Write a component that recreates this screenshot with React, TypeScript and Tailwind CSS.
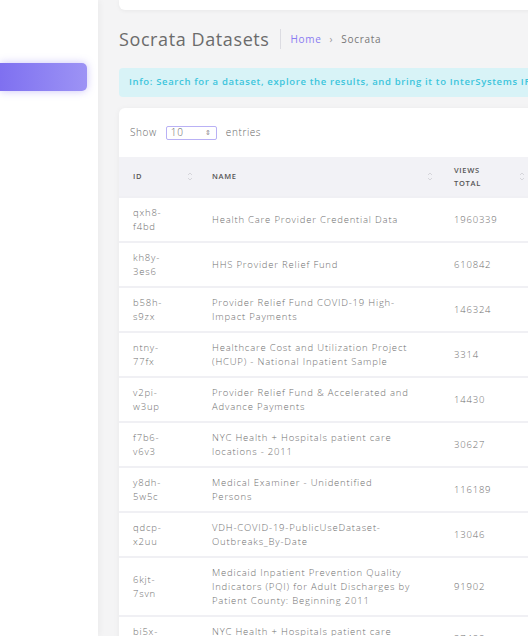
const ROWS = [
  { id: 'qxh8-f4bd', name: 'Health Care Provider Credential Data', views: '1960339' },
  { id: 'kh8y-3es6', name: 'HHS Provider Relief Fund', views: '610842' },
  { id: 'b58h-s9zx', name: 'Provider Relief Fund COVID-19 High-Impact Payments', views: '146324' },
  { id: 'ntny-77fx', name: 'Healthcare Cost and Utilization Project (HCUP) - National Inpatient Sample', views: '3314' },
  { id: 'v2pi-w3up', name: 'Provider Relief Fund & Accelerated and Advance Payments', views: '14430' },
  { id: 'f7b6-v6v3', name: 'NYC Health + Hospitals patient care locations - 2011', views: '30627' },
  { id: 'y8dh-5w5c', name: 'Medical Examiner - Unidentified Persons', views: '116189' },
  { id: 'qdcp-x2uu', name: 'VDH-COVID-19-PublicUseDataset-Outbreaks_By-Date', views: '13046' },
  { id: '6kjt-7svn', name: 'Medicaid Inpatient Prevention Quality Indicators (PQI) for Adult Discharges by Patient County: Beginning 2011', views: '91902' },
  { id: 'bi5x-ndcu', name: 'NYC Health + Hospitals patient care locations - 2012', views: '27488' },
];

function SortIcon() {
  return (
    <svg width="6" height="11" viewBox="0 0 6 11" className="shrink-0">
      <path d="M1 4 L3 2 L5 4" fill="none" stroke="#d2d2d8" strokeWidth="0.9" />
      <path d="M1 7 L3 9 L5 7" fill="none" stroke="#d2d2d8" strokeWidth="0.9" />
    </svg>
  );
}

export default function App() {
  return (
    <div
      className="flex h-[636px] w-[528px] overflow-hidden bg-[#f4f4f5]"
      style={{ fontFamily: '"Open Sans", "Liberation Sans", sans-serif' }}
    >
      {/* sidebar */}
      <aside className="relative z-10 w-[98px] shrink-0 bg-white pt-[63px] shadow-[2px_0_6px_rgba(0,0,0,0.04)]">
        <div className="h-[28px] w-[87px] rounded-r-[5px] bg-gradient-to-r from-[#7f70f0] to-[#9d93f5] shadow-[0_0_8px_rgba(124,108,240,0.4)]" />
      </aside>

      {/* main */}
      <main className="min-w-0 flex-1 pl-[21px]">
        <div className="w-[600px]">
          <div className="h-[10px] rounded-b-[6px] bg-white shadow-[0_1px_4px_rgba(0,0,0,0.05)]" />

          <div className="flex h-[58px] items-center">
            <h1 className="text-[18px] font-medium tracking-[0.6px] text-[#6b6b6b]">Socrata Datasets</h1>
            <div className="mx-[10px] h-[20px] w-px bg-[#dcdce2]" />
            <nav className="flex items-center gap-[8px] text-[10px] tracking-[0.7px] text-[#777]">
              <span className="text-[#8a7cf2]">Home</span>
              <span className="text-[#999]">›</span>
              <span>Socrata</span>
            </nav>
          </div>

          <div className="flex h-[29px] items-center rounded-l-[4px] bg-[#d8f3f7] pl-[10px] text-[9.5px] font-semibold tracking-[0.65px] text-[#3cc5dc]">
            Info: Search for a dataset, explore the results, and bring it to InterSystems IRIS.
          </div>

          <div className="mt-[11px] rounded-tl-[6px] bg-white shadow-[0_1px_6px_rgba(0,0,0,0.05)]">
            <div className="flex h-[49px] items-center pl-[11px] text-[10px] font-light tracking-[0.6px] text-[#666]">
              <span>Show</span>
              <div className="ml-[9px] flex h-[14px] w-[51px] items-center justify-between rounded-[2px] border border-[#b9b1f5] px-[4px] text-[#666]">
                <span>10</span>
                <span className="text-[7px] leading-none text-[#888]">⇕</span>
              </div>
              <span className="ml-[9px]">entries</span>
            </div>

            <table className="w-full border-collapse text-left">
              <colgroup>
                <col className="w-[80px]" />
                <col className="w-[242px]" />
                <col />
              </colgroup>
              <thead>
                <tr className="h-[40px] bg-[#f2f2f6] text-[7.5px] font-semibold uppercase tracking-[0.7px] text-[#555]">
                  <th className="pl-[14px] pr-[6px] font-semibold">
                    <div className="flex items-center justify-between">
                      <span>ID</span>
                      <SortIcon />
                    </div>
                  </th>
                  <th className="pl-[13px] pr-[8px] font-semibold">
                    <div className="flex items-center justify-between">
                      <span>Name</span>
                      <SortIcon />
                    </div>
                  </th>
                  <th className="pl-[13px] pr-[8px] font-semibold">
                    <div className="flex w-[71px] items-center justify-between">
                      <span className="leading-[13px]">Views<br />Total</span>
                      <SortIcon />
                    </div>
                  </th>
                </tr>
              </thead>
              <tbody className="text-[9.5px] font-light leading-[14px] tracking-[0.8px] text-[#707070]">
                {ROWS.map((r) => (
                  <tr key={r.id} className="border-t-2 border-[#f0f0f4]">
                    <td className="py-[7.5px] pl-[14px] align-middle">
                      <div className="w-[38px] break-words">{r.id}</div>
                    </td>
                    <td className="py-[7.5px] pl-[13px] pr-[28px] align-middle">{r.name}</td>
                    <td className="py-[7.5px] pl-[13px] align-middle">{r.views}</td>
                  </tr>
                ))}
              </tbody>
            </table>
          </div>
        </div>
      </main>
    </div>
  );
}
